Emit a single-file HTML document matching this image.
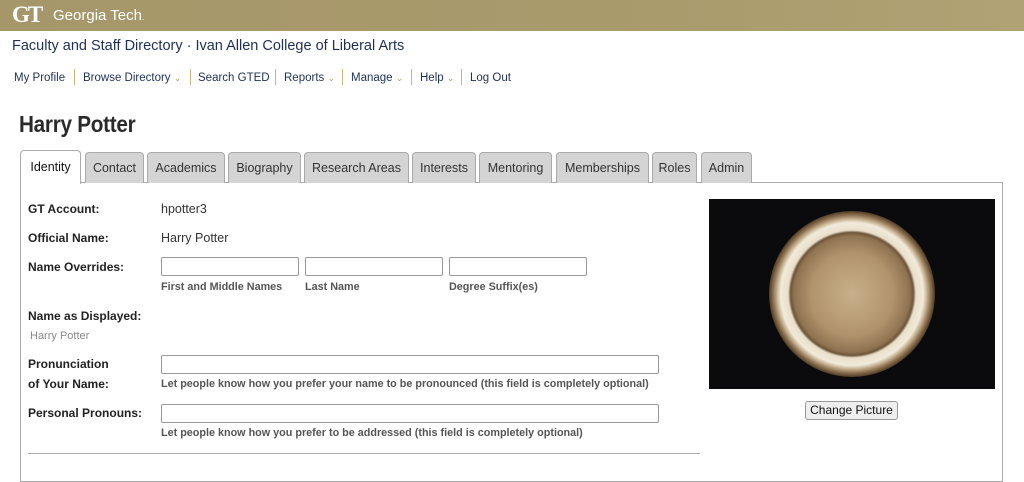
<!DOCTYPE html>
<html><head><style>
*{margin:0;padding:0;box-sizing:border-box}
body{width:1024px;height:462px;overflow:hidden;background:#fff;font-family:"Liberation Sans",sans-serif;position:relative;color:#222}
.a{position:absolute;white-space:nowrap}
.hdr{position:absolute;left:0;top:0;width:1024px;height:31px;background:linear-gradient(90deg,#a6976a,#a99a6c 60%,#b0a274)}
.nav{font-size:11.5px;color:#1f3055;top:72px}
.sep{position:absolute;top:69px;width:1px;height:16px;background:#c7b37a}
.tab{position:absolute;top:152px;height:31px;background:#d4d4d4;border:1px solid #aaa;border-bottom:none;border-radius:4px 4px 0 0;font-size:12.5px;color:#333;text-align:center;line-height:30px}
.lbl{font-weight:bold;font-size:12px;color:#222;left:28px}
.val{font-size:12.5px;color:#333;left:161px}
.inp{position:absolute;height:19px;border:1px solid #999;border-radius:2px;background:#fff}
.hint{font-size:10.8px;font-weight:bold;color:#555}
</style></head><body>
<div class="hdr"></div>
<div class="a" style="left:12px;top:4px;font-family:'Liberation Serif',serif;font-weight:bold;font-size:23px;color:#fff;letter-spacing:-2px;line-height:22px">GT</div>
<div class="a" style="left:53px;top:7px;font-size:15px;color:#fff">Georgia Tech<span style="font-size:8px">.</span></div>
<div class="a" style="left:12px;top:38px;font-size:14.5px;color:#1f3055">Faculty and Staff Directory · Ivan Allen College of Liberal Arts</div>
<div class="a nav" style="left:14px">My Profile</div>
<div class="sep" style="left:74px"></div>
<div class="a nav" style="left:83px">Browse Directory <span style="color:#b49a5a;font-size:9px">⌄</span></div>
<div class="sep" style="left:190px"></div>
<div class="a nav" style="left:198px">Search GTED</div>
<div class="sep" style="left:275px"></div>
<div class="a nav" style="left:284px">Reports <span style="color:#b49a5a;font-size:9px">⌄</span></div>
<div class="sep" style="left:342px"></div>
<div class="a nav" style="left:351px">Manage <span style="color:#b49a5a;font-size:9px">⌄</span></div>
<div class="sep" style="left:411px"></div>
<div class="a nav" style="left:420px">Help <span style="color:#b49a5a;font-size:9px">⌄</span></div>
<div class="sep" style="left:461px"></div>
<div class="a nav" style="left:470px">Log Out</div>

<div class="a" style="left:19px;top:111px;font-size:23px;font-weight:bold;color:#2a2a2a;letter-spacing:-0.3px;transform:scaleX(0.9);transform-origin:left">Harry Potter</div>

<div style="position:absolute;left:20px;top:182px;width:983px;height:300px;border:1px solid #aaa"></div>
<div class="tab" style="left:20px;top:150px;width:61px;height:34px;background:#fff;color:#111;line-height:32px;border-color:#aaa">Identity</div>
<div class="tab" style="left:85px;width:59px">Contact</div>
<div class="tab" style="left:147px;width:78px">Academics</div>
<div class="tab" style="left:228px;width:73px">Biography</div>
<div class="tab" style="left:304px;width:105px">Research Areas</div>
<div class="tab" style="left:412px;width:64px">Interests</div>
<div class="tab" style="left:479px;width:73px">Mentoring</div>
<div class="tab" style="left:556px;width:93px">Memberships</div>
<div class="tab" style="left:652px;width:45px">Roles</div>
<div class="tab" style="left:701px;width:51px">Admin</div>

<div class="a lbl" style="top:202px">GT Account:</div>
<div class="a val" style="top:202px">hpotter3</div>
<div class="a lbl" style="top:231px">Official Name:</div>
<div class="a val" style="top:231px">Harry Potter</div>
<div class="a lbl" style="top:260px">Name Overrides:</div>
<div class="inp" style="left:161px;top:257px;width:138px"></div>
<div class="inp" style="left:305px;top:257px;width:138px"></div>
<div class="inp" style="left:449px;top:257px;width:138px"></div>
<div class="a hint" style="left:161px;top:281px">First and Middle Names</div>
<div class="a hint" style="left:305px;top:281px">Last Name</div>
<div class="a hint" style="left:449px;top:281px">Degree Suffix(es)</div>
<div class="a lbl" style="top:309px">Name as Displayed:</div>
<div class="a" style="left:30px;top:330px;font-size:11px;color:#888">Harry Potter</div>
<div class="a lbl" style="top:357px">Pronunciation</div>
<div class="a lbl" style="top:377px">of Your Name:</div>
<div class="inp" style="left:161px;top:355px;width:498px"></div>
<div class="a hint" style="left:161px;top:378px">Let people know how you prefer your name to be pronounced (this field is completely optional)</div>
<div class="a lbl" style="top:406px">Personal Pronouns:</div>
<div class="inp" style="left:161px;top:404px;width:498px"></div>
<div class="a hint" style="left:161px;top:427px">Let people know how you prefer to be addressed (this field is completely optional)</div>
<div style="position:absolute;left:28px;top:453px;width:672px;height:1px;background:#aaa"></div>

<div style="position:absolute;left:709px;top:199px;width:286px;height:190px;background:#0b0b0d;overflow:hidden">
<div style="position:absolute;left:60px;top:12px;width:166px;height:166px;border-radius:50%;background:radial-gradient(circle closest-side,#c9b08a 0%,#b0936c 50%,#8f7250 70%,#6e553a 74%,#e9dfca 77%,#f1eadb 86%,#c9b596 90%,#8d7150 95%,#4f3b27 100%)"></div>
</div>
<div style="position:absolute;left:805px;top:401px;width:93px;height:19px;border:1px solid #999;border-radius:3px;background:#eee;font-size:12px;text-align:center;line-height:17px;color:#111">Change Picture</div>
</body></html>
